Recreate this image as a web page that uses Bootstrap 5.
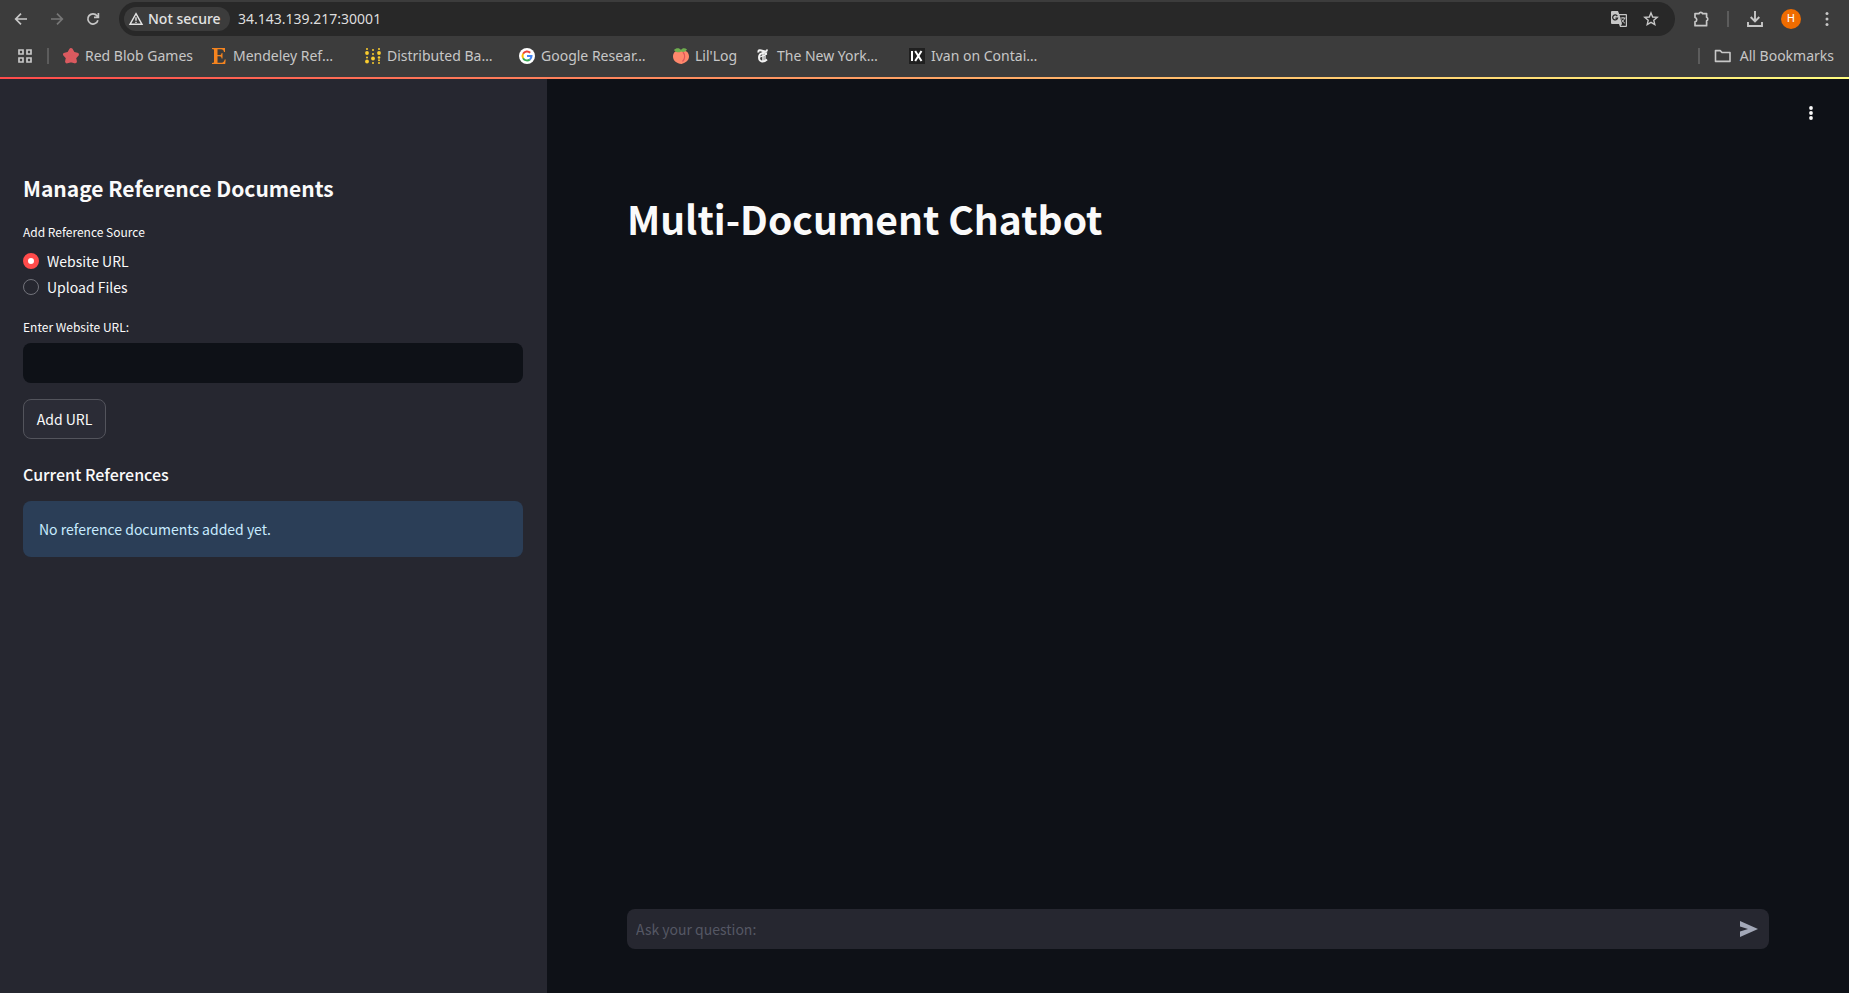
<!DOCTYPE html>
<html lang="en">
<head>
<meta charset="utf-8">
<meta name="viewport" content="width=device-width, initial-scale=1">
<title>Multi-Document Chatbot</title>
<link href="https://cdn.jsdelivr.net/npm/bootstrap@5.3.0/dist/css/bootstrap.min.css" rel="stylesheet">
<style>
  body { background: #0e1117; color: #fafafa; font: 14px/24px "Noto Sans CJK SC", "Noto Sans", sans-serif; }
  svg { display: block; flex: none; }

  /* Browser chrome */
  .chrome { background: #3c3c3c; color: #c7c7c7; font: 14px/20px "Noto Sans", "Open Sans", sans-serif; }
  .toolbar { height: 38px; padding: 0 8px 0 7px; }
  .tool { width: 28px; height: 28px; padding: 0; border: 0; background: none; color: #c7c7c7; display: flex; align-items: center; justify-content: center; }
  .tool:disabled { color: #777; }
  .omnibox { height: 34px; margin: 0 4px; padding: 0 10px 0 5px; border-radius: 17px; background: #282828; }
  .security { height: 24px; width: 106px; padding: 0 0 0 4px; border: 0; border-radius: 12px; background: #3c3c3c; color: #e3e3e3; font-weight: 500; white-space: nowrap; }
  .address { border: 0; padding: 0; margin-left: 8px; background: none; color: #dedede; min-width: 0; outline: 0; }
  .divider { width: 2px; height: 16px; background: #5c5c5c; flex: none; }
  .avatar { width: 20px; height: 20px; border-radius: 50%; background: #ef6c00; color: #fff; font: 11px/20px Roboto, sans-serif; }
  .bookmarks { padding: 0 15px 3px 17px; height: 39px; }
  .bookmarks .divider { margin: 0 14px; }
  .bm { display: flex; align-items: center; gap: 6px; color: #c7c7c7; text-decoration: none; white-space: nowrap; width: 154px; flex: none; }
  .bm-first { width: 148px; }
  .bm-short { width: 82px; }
  .decoration { height: 2px; background: linear-gradient(90deg, #ff4b4b, #fffd80); }

  /* Application */
  .sidebar { flex: 0 0 547px; background: #262730; padding: 95px 24px 24px 23px; }
  .sidebar h2 { font-size: 21px; line-height: 28px; font-weight: 600; margin: 0 0 20px; }
  .sidebar h3 { font-size: 16px; line-height: 24px; font-weight: 500; margin: 23px 0 15px; }
  .field-label { font-size: 12px; line-height: 20px; margin: 0 0 6px; float: none; }
  .choices { display: grid; gap: 2px; padding: 1px 0 2px; }
  .choice { display: flex; align-items: center; gap: 8px; height: 24px; }
  .choice input { appearance: none; width: 16px; height: 16px; margin: 0; border-radius: 50%; border: 1px solid #72737b; background: #262730; }
  .choice input:checked { border: 5px solid #ff4b4b; background: #fff; }
  .url-input { height: 40px; border: 0; border-radius: 8px; background: #0e1117; color: #fafafa; }
  .url-input:focus { background: #0e1117; color: #fafafa; }
  .add-btn { height: 40px; width: 83px; margin-top: 16px; padding: 0; font-size: 14px; color: #fafafa; background: #2b2c36; border: 1px solid #53545c; border-radius: 8px; }
  .notice { background: #2b3e57; color: #c7ebff; border: 0; border-radius: 8px; padding: 16px; margin: 0; }
  .content { padding: 20px 80px 44px; min-width: 0; }
  .app-menu { align-self: flex-end; margin-right: -56px; }
  .app-menu .tool { color: #fafafa; }
  .content h1 { font-size: 39px; line-height: 52px; font-weight: 700; margin: 65px 0 0; }
  .ask { height: 40px; border-radius: 8px; background: #262730; padding: 0 6px 0 9px; }
  .ask input { border: 0; background: none; color: #fafafa; padding: 0; min-width: 0; outline: 0; }
  .ask input::placeholder { color: #555764; opacity: 1; }
  .ask .tool { color: #a3a8b8; }
</style>
</head>
<body>
<div class="d-flex flex-column min-vh-100">
  <header class="chrome">
    <div class="toolbar d-flex align-items-center gap-2">
      <button class="tool" aria-label="Back"><svg width="16" height="16" viewBox="0 0 16 16" fill="none" stroke="currentColor" stroke-width="1.7"><path d="M14 8H3M8 2.7 2.7 8 8 13.3"/></svg></button>
      <button class="tool" aria-label="Forward" disabled><svg width="16" height="16" viewBox="0 0 16 16" fill="none" stroke="currentColor" stroke-width="1.7"><path d="M2 8h11M8 2.7 13.3 8 8 13.3"/></svg></button>
      <button class="tool" aria-label="Reload"><svg width="16" height="16" viewBox="0 0 16 16" fill="none" stroke="currentColor" stroke-width="1.7"><path d="M12.9 9.2A5.1 5.1 0 1 1 12 4.8l1.2 1.4M13.4 2v4.4H9"/></svg></button>
      <div class="omnibox d-flex align-items-center flex-grow-1">
        <button class="security d-flex align-items-center gap-1 flex-shrink-0"><svg width="16" height="16" viewBox="0 0 16 16" fill="none" stroke="currentColor" stroke-width="1.4"><path d="M8 2.6 14 13.3H2zM8 6.3v3.5M8 10.7v1.4"/></svg>Not secure</button>
        <input class="address flex-grow-1" type="text" aria-label="Address" value="34.143.139.217:30001">
        <button class="tool me-1" aria-label="Translate"><svg width="18" height="18" viewBox="0 0 18 18"><path d="M2 1h6l1.2 3H16a1 1 0 0 1 1 1v11a1 1 0 0 1-1 1h-6l-1-3H2a1 1 0 0 1-1-1V2a1 1 0 0 1 1-1z" fill="#c7c7c7"/><path d="M9.6 5.2h6.2v10.6h-5.1L12 14z" fill="#282828"/><path d="M7.3 6.1a2.5 2.5 0 1 0 .3 2H5.4" fill="none" stroke="#282828" stroke-width="1.2"/><path d="M10.5 8h5M13 7v1M14.6 8c-.5 2-1.6 3.3-3 4.3M11.6 9.5c.7 1.5 2 2.8 3.3 3.7" fill="none" stroke="#c7c7c7"/></svg></button>
        <button class="tool" aria-label="Bookmark this page"><svg width="16" height="16" viewBox="0 0 16 16" fill="none" stroke="currentColor" stroke-width="1.4"><path d="m8 1.9 1.7 4.1 4.5.4-3.4 2.9 1 4.3L8 11.3l-3.8 2.3 1-4.3L1.800 6.400 6.300 6z"/></svg></button>
      </div>
      <button class="tool" aria-label="Extensions"><svg width="18" height="18" viewBox="0 0 18 18" fill="none" stroke="currentColor" stroke-width="1.7"><path d="M3 3.600h4a1.900 1.700 0 0 1 3.600 0h4v3.700a1.700 1.900 0 0 1 0 3.600v4.800H3v-3.900a2.200 2.200 0 0 0 0-4.300z" stroke-linejoin="round"/></svg></button>
      <span class="divider mx-1"></span>
      <button class="tool" aria-label="Downloads"><svg width="18" height="18" viewBox="0 0 18 18" fill="none" stroke="currentColor" stroke-width="1.9"><path d="M9 1v10M4.700 7 9 11.300 13.300 7M2 12v4h14v-4"/></svg></button>
      <button class="tool" aria-label="Profile"><span class="avatar">H</span></button>
      <button class="tool" aria-label="Menu"><svg width="16" height="16" viewBox="0 0 16 16" fill="currentColor"><circle cx="8" cy="2.500" r="1.500"/><circle cx="8" cy="8" r="1.500"/><circle cx="8" cy="13.500" r="1.500"/></svg></button>
    </div>
    <nav class="bookmarks d-flex align-items-center" aria-label="Bookmarks">
      <svg width="16" height="16" viewBox="0 0 16 16" fill="none" stroke="#c7c7c7" stroke-width="1.700"><path d="M2 2h4v4H2zM10 2h4v4h-4zM2 10h4v4H2zM10 10h4v4h-4z"/></svg>
      <span class="divider"></span>
      <a class="bm bm-first" href="#"><svg width="16" height="16" viewBox="0 0 16 16"><path d="m8 2 2 3.500 4 1-2.700 3 .7 4L8 12.500l-4 1 .7-4L2 6.500l4-1z" fill="#db5a5f" stroke="#db5a5f" stroke-width="3.800" stroke-linejoin="round"/></svg>Red Blob Games</a>
      <a class="bm" href="#"><svg width="16" height="16" viewBox="0 0 16 16"><path d="M1 0h13v4h-1c-.4-2-1-2.800-3-2.800H6.500v5.900h2c1.500 0 1.900-.8 2.100-2.200h.9v5.600h-.9c-.2-1.500-.6-2.200-2.100-2.200h-2v6.400h4c2 0 2.700-1.200 3.200-3.200h1l-.5 4.500H1v-1l2-.5V1.500L1 1z" fill="#f5841f"/></svg>Mendeley Ref…</a>
      <a class="bm" href="#"><svg width="16" height="16" viewBox="0 0 16 16" fill="#fbcd2e"><circle cx="2" cy="1" r="1"/><circle cx="2" cy="5" r="1.900"/><circle cx="2" cy="9.500" r="1"/><circle cx="2" cy="13.500" r="1.900"/><circle cx="8" cy="2" r="1"/><circle cx="8" cy="6" r="1"/><circle cx="8" cy="10.500" r="1.900"/><circle cx="8" cy="15" r="1"/><circle cx="14" cy="1" r="1"/><circle cx="14" cy="5" r="1.900"/><circle cx="14" cy="9.500" r="1.300"/><circle cx="14" cy="12.200" r="1"/><circle cx="14" cy="15" r="1"/></svg>Distributed Ba…</a>
      <a class="bm" href="#"><svg width="16" height="16" viewBox="0 0 16 16" fill="none" stroke-width="2"><circle cx="8" cy="8" r="8" fill="#fff"/><path d="M11.200 4.800A4.500 4.500 0 0 0 4.100 5.800" stroke="#ea4335"/><path d="M4.100 5.800a4.500 4.500 0 0 0 0 4.400" stroke="#fbbc05"/><path d="M4.100 10.200a4.500 4.500 0 0 0 6.800 1.200" stroke="#34a853"/><path d="M10.900 11.400A4.500 4.500 0 0 0 12.500 8H8" stroke="#4285f4"/></svg>Google Resear…</a>
      <a class="bm bm-short" href="#"><svg width="16" height="16" viewBox="0 0 16 16"><path d="M8 3c4-1.500 8 1 8 5.500S12 15 8.500 16C4 15.500 0 13 0 8.500S4 1.500 8 3z" fill="#ff886c"/><path d="M10 4c2.500 3 2 7-.5 9.500" fill="none" stroke="#e0555c" stroke-width="1.200"/><path d="M8 3.500C6 5 2.500 4.500 1 2c2-2.500 5.500-2.500 7 0 1-2 4-2.500 6-.5-1.500 2.500-4 3-6 2z" fill="#6fae4f"/></svg>Lil'Log</a>
      <a class="bm" href="#"><svg width="16" height="16" viewBox="0 0 16 16" fill="none" stroke="#f2f2f2"><path d="M3.500 4.500C3 1.500 5.500 2 8 3s4 .5 4-1.500" stroke-width="2"/><path d="M12 5.500C8 4 4 5.500 4 9.500S8 15 12 11.500" stroke-width="1.900"/><path d="M8 4v9" stroke-width="1.500"/><path d="M4 9.500 12 6M10 6v6" stroke-width="1.300"/></svg>The New York…</a>
      <a class="bm" href="#"><svg width="16" height="16" viewBox="0 0 16 16"><path fill="#202020" d="M0 0h16v16H0z"/><path d="M3 3v10M6.200 3l6.300 10M12.500 3 6.200 13" stroke="#fff" stroke-width="2" fill="none"/></svg>Ivan on Contai…</a>
      <span class="divider ms-auto"></span>
      <a class="bm w-auto gap-2" href="#"><svg width="18" height="16" viewBox="0 0 18 16" fill="none" stroke="#c7c7c7" stroke-width="1.600"><path d="M1.500 2.600h4.700l1.800 1.900h8v8.900H1.500z" stroke-linejoin="round"/></svg>All Bookmarks</a>
    </nav>
    <div class="decoration"></div>
  </header>

  <div class="d-flex flex-grow-1">
    <aside class="sidebar">
      <h2>Manage Reference Documents</h2>
      <fieldset>
        <legend class="field-label">Add Reference Source</legend>
        <div class="choices">
          <label class="choice"><input type="radio" name="source" checked>Website URL</label>
          <label class="choice"><input type="radio" name="source">Upload Files</label>
        </div>
      </fieldset>
      <label class="field-label d-block mt-3" for="url">Enter Website URL:</label>
      <input class="form-control url-input" id="url" type="text">
      <button class="btn add-btn" type="button">Add URL</button>
      <h3>Current References</h3>
      <div class="alert notice" role="status">No reference documents added yet.</div>
    </aside>
    <main class="content d-flex flex-column flex-grow-1">
      <div class="app-menu"><button class="tool" aria-label="App menu"><svg width="16" height="16" viewBox="0 0 16 16" fill="currentColor"><circle cx="8" cy="3" r="1.900"/><circle cx="8" cy="8" r="1.900"/><circle cx="8" cy="13" r="1.900"/></svg></button></div>
      <h1>Multi-Document Chatbot</h1>
      <form class="ask d-flex align-items-center mt-auto">
        <input class="flex-grow-1" type="text" placeholder="Ask your question:" aria-label="Ask your question">
        <button class="tool" type="button" aria-label="Send"><svg width="18" height="16" viewBox="0 0 18 16" fill="currentColor"><path d="M0 0 18 8 0 16v-5.500L8 8 0 5.500z"/></svg></button>
      </form>
    </main>
  </div>
</div>
<script src="https://cdn.jsdelivr.net/npm/bootstrap@5.3.0/dist/js/bootstrap.bundle.min.js"></script>
</body>
</html>
